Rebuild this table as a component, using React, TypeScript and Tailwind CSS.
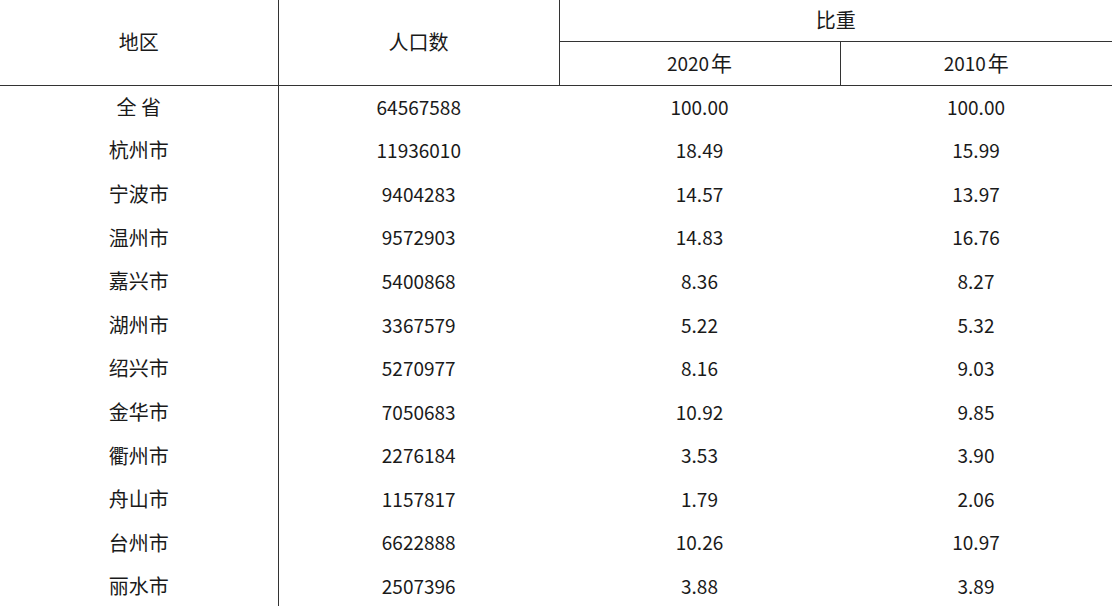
import React from "react";

type Row = {
  name: string;
  pop: string;
  y2020: string;
  y2010: string;
};

const rows: Row[] = [
  { name: "全 省", pop: "64567588", y2020: "100.00", y2010: "100.00" },
  { name: "杭州市", pop: "11936010", y2020: "18.49", y2010: "15.99" },
  { name: "宁波市", pop: "9404283", y2020: "14.57", y2010: "13.97" },
  { name: "温州市", pop: "9572903", y2020: "14.83", y2010: "16.76" },
  { name: "嘉兴市", pop: "5400868", y2020: "8.36", y2010: "8.27" },
  { name: "湖州市", pop: "3367579", y2020: "5.22", y2010: "5.32" },
  { name: "绍兴市", pop: "5270977", y2020: "8.16", y2010: "9.03" },
  { name: "金华市", pop: "7050683", y2020: "10.92", y2010: "9.85" },
  { name: "衢州市", pop: "2276184", y2020: "3.53", y2010: "3.90" },
  { name: "舟山市", pop: "1157817", y2020: "1.79", y2010: "2.06" },
  { name: "台州市", pop: "6622888", y2020: "10.26", y2010: "10.97" },
  { name: "丽水市", pop: "2507396", y2020: "3.88", y2010: "3.89" },
];

const App = () => {
  return (
    <div className="w-[1112px] h-[606px] overflow-hidden bg-white text-[#1a1a1a] font-['Microsoft_YaHei','Noto_Sans_CJK_SC',sans-serif] text-[19px]">
      <table className="w-[1112px] border-collapse table-fixed">
        <colgroup>
          <col className="w-[278px]" />
          <col className="w-[281px]" />
          <col className="w-[281px]" />
          <col className="w-[272px]" />
        </colgroup>
        <thead>
          <tr className="h-[41px]">
            <th
              rowSpan={2}
              className="font-normal border-r border-b border-[#333] text-center text-[20px]"
            >
              地区
            </th>
            <th
              rowSpan={2}
              className="font-normal border-r border-b border-[#333] text-center text-[20px]"
            >
              人口数
            </th>
            <th
              colSpan={2}
              className="font-normal border-b border-[#333] text-center text-[20px]"
            >
              比重
            </th>
          </tr>
          <tr className="h-[44px]">
            <th className="font-normal border-r border-b border-[#333] text-center">
              2020<span className="text-[21px] ml-[2px]">年</span>
            </th>
            <th className="font-normal border-b border-[#333] text-center">
              2010<span className="text-[21px] ml-[2px]">年</span>
            </th>
          </tr>
        </thead>
        <tbody>
          {rows.map((row, index) => (
            <tr key={index} className="h-[43.6px]">
              <td className="border-r border-[#333] text-center text-[20px]">
                {row.name}
              </td>
              <td className="text-center">{row.pop}</td>
              <td className="text-center">{row.y2020}</td>
              <td className="text-center">{row.y2010}</td>
            </tr>
          ))}
        </tbody>
      </table>
    </div>
  );
};

export default App;
